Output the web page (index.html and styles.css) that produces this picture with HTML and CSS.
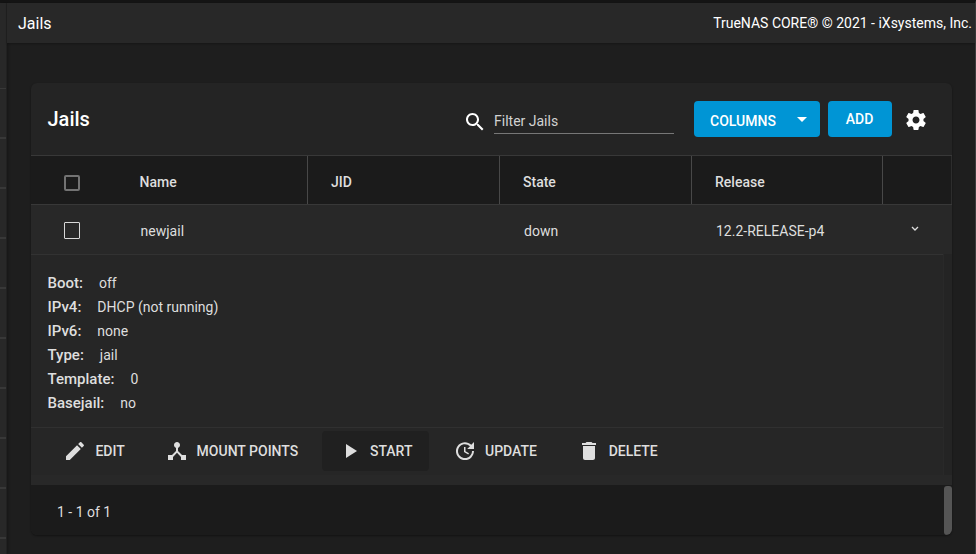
FILE: index.html
```html
<!DOCTYPE html>
<html lang="en">
<head>
<meta charset="utf-8">
<title>Jails</title>
<link rel="stylesheet" href="styles.css">
</head>
<body>
<div class="app">
  <aside class="sidebar"><i></i><i></i><i></i><i></i><i></i><i></i><i></i><i></i><i></i><i></i></aside>
  <main class="main">
    <header class="topbar"><span class="crumb">Jails</span><span class="copyright">TrueNAS CORE® © 2021 - iXsystems, Inc.</span></header>
    <section class="card">
      <div class="card-head">
        <h1>Jails</h1>
        <svg class="icon search" viewBox="0 0 24 24"><path d="M15.5 14h-.79l-.28-.27C15.41 12.59 16 11.11 16 9.5 16 5.91 13.09 3 9.5 3S3 5.91 3 9.5 5.91 16 9.5 16c1.61 0 3.09-.59 4.23-1.57l.27.28v.79l5 4.99L20.49 19l-4.99-5zm-6 0C7.01 14 5 11.99 5 9.5S7.01 5 9.5 5 14 7.01 14 9.5 11.99 14 9.5 14z"/></svg>
        <div class="filter">Filter Jails</div>
        <button class="btn columns"><span>COLUMNS</span><svg class="icon" viewBox="0 0 24 24"><path d="M7 10l5 5 5-5z"/></svg></button>
        <button class="btn add">ADD</button>
        <svg class="icon gear" viewBox="0 0 24 24"><path d="M19.43 12.98c.04-.32.07-.64.07-.98s-.03-.66-.07-.98l2.11-1.65c.19-.15.24-.42.12-.64l-2-3.46c-.12-.22-.39-.3-.61-.22l-2.49 1c-.52-.4-1.08-.73-1.69-.98l-.38-2.65C14.46 2.18 14.25 2 14 2h-4c-.25 0-.46.18-.49.42l-.38 2.65c-.61.25-1.17.59-1.69.98l-2.49-1c-.23-.09-.49 0-.61.22l-2 3.46c-.13.22-.07.49.12.64l2.11 1.65c-.04.32-.07.65-.07.98s.03.66.07.98l-2.11 1.65c-.19.15-.24.42-.12.64l2 3.46c.12.22.39.3.61.22l2.49-1c.52.4 1.08.73 1.69.98l.38 2.65c.03.24.24.42.49.42h4c.25 0 .46-.18.49-.42l.38-2.65c.61-.25 1.17-.59 1.69-.98l2.49 1c.23.09.49 0 .61-.22l2-3.46c.12-.22.07-.49-.12-.64l-2.11-1.65zM12 15.5c-1.93 0-3.5-1.57-3.5-3.5s1.57-3.5 3.5-3.5 3.5 1.57 3.5 3.5-1.57 3.5-3.5 3.5z"/></svg>
      </div>
      <div class="row thead">
        <div class="check"><span class="box thick"></span></div><div class="name">Name</div><div>JID</div><div>State</div><div>Release</div><div class="more"></div>
      </div>
      <div class="row tbody">
        <div class="check"><span class="box"></span></div><div class="name">newjail</div><div></div><div>down</div><div>12.2-RELEASE-p4</div>
        <div class="more"><svg class="chevron" viewBox="0 0 8 6"><path d="M1 1l3 3 3-3"/></svg></div>
      </div>
      <div class="expanded">
        <dl class="details">
          <div><dt>Boot:</dt><dd>off</dd></div>
          <div><dt>IPv4:</dt><dd>DHCP (not running)</dd></div>
          <div><dt>IPv6:</dt><dd>none</dd></div>
          <div><dt>Type:</dt><dd>jail</dd></div>
          <div><dt>Template:</dt><dd>0</dd></div>
          <div><dt>Basejail:</dt><dd>no</dd></div>
        </dl>
        <div class="actions">
          <button class="edit"><svg class="icon" viewBox="0 0 24 24"><path d="M3 17.25V21h3.75L17.81 9.94l-3.75-3.75L3 17.25zM20.71 7.04c.39-.39.39-1.02 0-1.41l-2.34-2.34c-.39-.39-1.02-.39-1.41 0l-1.83 1.83 3.75 3.75 1.83-1.83z"/></svg>EDIT</button>
          <button class="mount"><svg class="icon" viewBox="0 0 24 24"><path d="M17 16l-4-4V8.82C14.16 8.4 15 7.3 15 6c0-1.66-1.34-3-3-3S9 4.34 9 6c0 1.3.84 2.4 2 2.82V12l-4 4H3v5h5v-3.05l4-4.2 4 4.2V21h5v-5h-4z"/></svg>MOUNT POINTS</button>
          <button class="start"><svg class="icon" viewBox="0 0 24 24"><path d="M8 5v14l11-7z"/></svg>START</button>
          <button class="update"><svg class="icon" viewBox="0 0 24 24"><path d="M21 10.12h-6.78l2.74-2.82c-2.73-2.7-7.15-2.8-9.88-.1-2.73 2.71-2.73 7.08 0 9.79s7.15 2.71 9.88 0C18.32 15.65 19 14.08 19 12.1h2c0 1.98-.88 4.55-2.64 6.29-3.51 3.48-9.21 3.48-12.72 0-3.5-3.47-3.53-9.11-.02-12.58s9.14-3.47 12.65 0L21 3v7.12zM12.5 8v4.25l3.5 2.08-.72 1.21L11 13V8h1.5z"/></svg>UPDATE</button>
          <button class="delete"><svg class="icon" viewBox="0 0 24 24"><path d="M6 19c0 1.100.9 2 2 2h8c1.100 0 2-.9 2-2V7H6v12zM19 4h-3.500l-1-1h-5l-1 1H5v2h14V4z"/></svg>DELETE</button>
        </div>
      </div>
      <div class="strip"></div>
      <footer class="pager"><span>1 - 1 of 1</span><span class="thumb"></span></footer>
    </section>
  </main>
</div>
</body>
</html>
```
FILE: styles.css
```css
* { box-sizing: border-box; }
body { margin: 0; background: #1e1e1e; color: #dedede; font: 14px/24px Roboto, sans-serif; overflow: hidden; }
.app { display: flex; height: 554px; border-top: 3px solid #141414; border-right: 1px solid #3c3c3c; }
.sidebar { width: 7px; padding-top: 85px; background: #282828; border-right: 1px solid #212121; box-shadow: 1px 0 3px rgba(0,0,0,.3); display: flex; flex-direction: column; gap: 48px; }
.sidebar i { display: block; height: 2px; background: #383838; flex: none; }
.sidebar i:first-child { height: 1px; }
.main { flex: 1; }
.topbar { height: 40px; padding: 0 3px 0 11px; background: #282828; display: flex; align-items: center; justify-content: space-between; color: #fff; box-shadow: 0 1px 2px rgba(0,0,0,.25); }
.crumb { font-size: 16px; padding-top: 2px; }
.copyright { font-size: 14px; }
.card { width: 921px; height: 452px; margin: 40px 0 0 24px; background: #242424; border-radius: 6px; overflow: hidden; box-shadow: 0 1px 2px rgba(0,0,0,.4); }
.card-head { height: 72px; padding-left: 16.5px; display: flex; align-items: center; color: #fff; }
h1 { margin: 0; width: 415.5px; font-size: 20px; font-weight: 500; }
.icon { display: block; width: 24px; height: 24px; fill: currentColor; flex: none; }
.search { margin-top: 5px; }
.filter { width: 180px; height: 24px; margin: 5px 20px 0 7px; border-bottom: 1px solid #777; color: #d2d2d2; line-height: 23px; }
.btn { height: 36px; border: 0; padding: 0; border-radius: 4px; background: #0095d5; color: #fff; font: 500 14px/36px Roboto, sans-serif; }
.columns { width: 126px; display: flex; align-items: center; justify-content: space-between; padding: 0 6.5px 0 16px; margin-right: 8px; }
.columns span { padding-top: 4px; }
.add { width: 64px; padding-right: 1px; margin-right: 11.5px; }
.gear { margin-top: 2px; }
.row { display: grid; grid-template-columns: 85px 192px 192px 192px 191px 69px; }
.row > div { padding-left: 23px; display: flex; align-items: center; }
.row > .check { padding-left: 33px; }
.thead { height: 50px; border: solid #383838; border-width: 1px 0; background: #1b1b1b; font-weight: 500; }
.thead > div { border-right: 1px solid #484848; padding-top: 4px; }
.thead > .check { border: 0; }
.thead > .name { padding-left: 23.6px; }
.thead > .more { border-color: #2d2d2d; }
.tbody { height: 49px; background: #282828; }
.tbody > div { padding-left: 24px; padding-top: 2px; }
.tbody > .name { padding-left: 24.6px; }
.box { width: 16px; height: 17px; border: 1px solid #d8d8d8; border-radius: 1px; }
.thick { height: 16px; border: 2px solid #737373; border-radius: 2px; margin-top: 1px; }
.row > .more { padding-left: 27.5px; }
.chevron { width: 8px; height: 6px; fill: none; stroke: #ddd; stroke-width: 1.3; margin-top: -3px; }
.expanded { width: 913px; background: #262626; border-right: 1px solid #292929; }
.details { margin: 0; height: 173px; padding: 16px 16.5px 0; border-top: 1px solid #323232; }
.details div { display: flex; gap: 16px; }
.details dt { font-weight: 500; font-size: 15px; }
.details dd { margin: 0; }
.actions { height: 48px; border-top: 1px solid #303030; padding: 3px 0 0 16.4px; display: flex; }
.actions button { height: 40px; border: 0; border-radius: 4px; padding: 0 0 0 16px; display: flex; align-items: center; gap: 8px; background: transparent; color: inherit; font: 500 14px/24px Roboto, sans-serif; }
.edit { width: 101.2px; }
.mount { width: 173.4px; }
.actions .start { width: 107px; margin-right: 8px; background: #202020; }
.update { width: 123.7px; }
.delete { width: 110px; }
.strip { height: 10px; background: #282828; }
.pager { position: relative; height: 50px; padding: 15px 0 0 26px; background: #1b1b1b; }
.thumb { position: absolute; right: 0; top: 1px; width: 8px; height: 49px; border-radius: 3px; background: #555; }
```
